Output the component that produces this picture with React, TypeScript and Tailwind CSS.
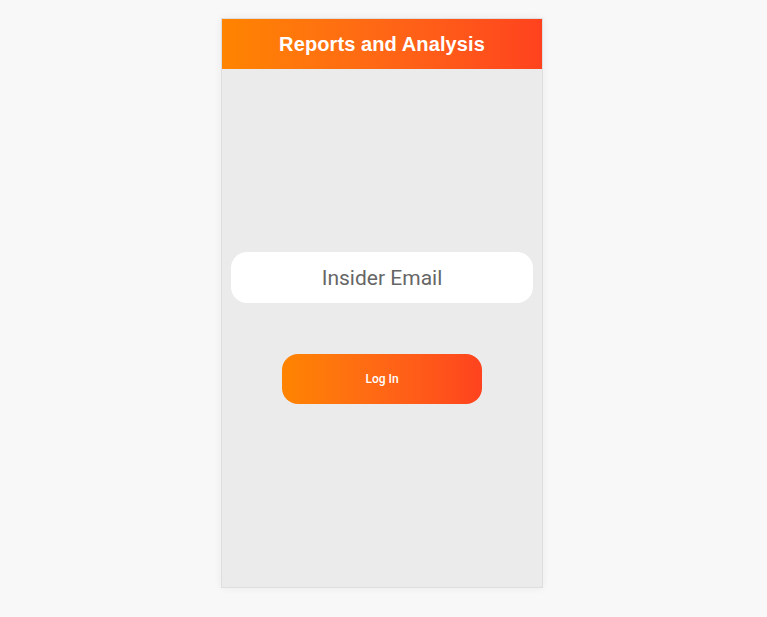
export default function App() {
  return (
    <div className="flex min-h-[617px] justify-center bg-[#f8f8f8] pt-[18px] pr-[3px] font-['Liberation_Sans',Arial,sans-serif]">
      <div className="flex h-[570px] w-[322px] flex-col border border-[#dedede] bg-[#ebebeb] shadow-[0_0_8px_rgba(0,0,0,0.06)]">
        {/* Header */}
        <div className="flex h-[50px] shrink-0 items-center justify-center bg-gradient-to-r from-[#ff8400] to-[#ff421e]">
          <h1 className="text-[20px] font-bold tracking-[0.1px] text-white">Reports and Analysis</h1>
        </div>

        {/* Login form */}
        <div className="flex flex-1 flex-col items-center justify-center gap-[51px]">
          <input
            type="email"
            placeholder="Insider Email"
            className="h-[51px] w-[302px] rounded-[16px] bg-white text-center font-['Roboto',sans-serif] text-[21px] text-[#555] outline-none placeholder:text-[#666]"
          />
          <button className="h-[50px] w-[200px] rounded-[16px] bg-gradient-to-r from-[#ff8400] to-[#ff421e] font-['Roboto',sans-serif] text-[12px] font-medium text-white">
            Log In
          </button>
        </div>
      </div>
    </div>
  );
}
